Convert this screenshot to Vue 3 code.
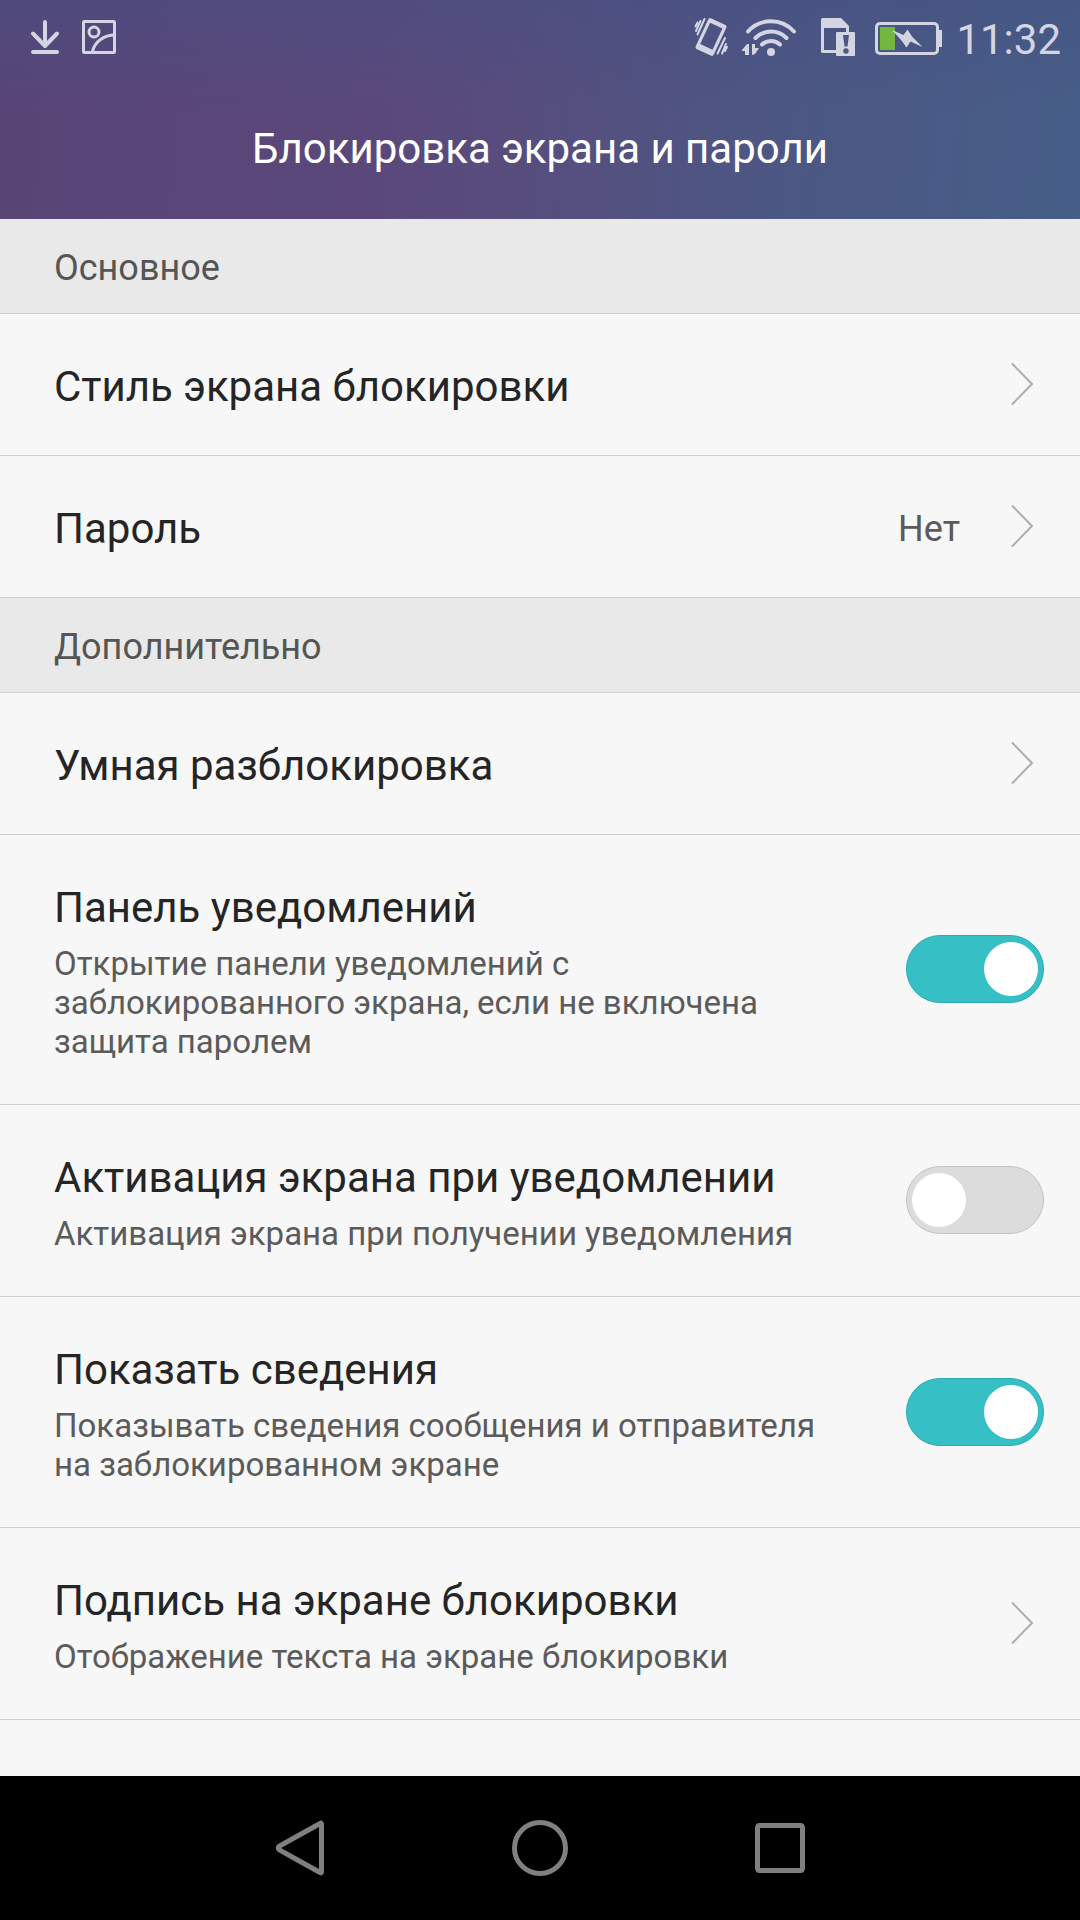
<script setup>
import { ref } from 'vue'

const sections = ref([
  {
    title: 'Основное',
    rows: [
      { id: 'style', title: 'Стиль экрана блокировки' },
      { id: 'password', title: 'Пароль', value: 'Нет' },
    ],
  },
  {
    title: 'Дополнительно',
    rows: [
      { id: 'smart', title: 'Умная разблокировка' },
      {
        id: 'panel',
        title: 'Панель уведомлений',
        text: 'Открытие панели уведомлений с заблокированного экрана, если не включена защита паролем',
        toggle: true,
        on: true,
      },
      {
        id: 'wake',
        title: 'Активация экрана при уведомлении',
        text: 'Активация экрана при получении уведомления',
        toggle: true,
        on: false,
      },
      {
        id: 'details',
        title: 'Показать сведения',
        text: 'Показывать сведения сообщения и отправителя на заблокированном экране',
        toggle: true,
        on: true,
      },
      {
        id: 'signature',
        title: 'Подпись на экране блокировки',
        text: 'Отображение текста на экране блокировки',
      },
    ],
  },
])
</script>

<template>
  <div class="screen">
    <header class="top">
      <div class="status">
        <svg class="icon" width="34" height="78" viewBox="28 0 34 78" aria-hidden="true">
          <path d="M45 22V45M33 33.500L45 46L57 33.500M33 52H57" class="line thick" />
        </svg>
        <svg class="icon" width="34" height="78" viewBox="82 0 34 78" aria-hidden="true">
          <rect x="83.500" y="21.500" width="31" height="31" rx="1" class="line" />
          <circle cx="94" cy="32" r="5" class="line mid" />
          <path d="M92.500 52C94 42 104 35 115 35" class="line" />
        </svg>
        <span class="spacer"></span>
        <svg class="icon" width="38" height="78" viewBox="691 0 38 78" aria-hidden="true">
          <g transform="rotate(25 710 37)">
            <path fill-rule="evenodd" class="fill" d="M702.500 20H717.500Q720 20 720 22.500V51.500Q720 54 717.500 54H702.500Q700 54 700 51.500V22.500Q700 20 702.500 20ZM703.200 24.500V48H716.800V24.500Z" />
          </g>
          <path class="line thin" d="M703.500 19L696.500 34.500M699.500 21L695 31M696.500 22.500L694.500 26.500M724 38L716.500 53.500M725 44L721 53.500M726 47L724 51" />
        </svg>
        <svg class="icon wifi" width="56" height="78" viewBox="740 0 56 78" aria-hidden="true">
          <path class="line thick" d="M747 31.500A31 31 0 0 1 793 31.500M754.500 38A22 22 0 0 1 785.500 38M761 44.500A13 13 0 0 1 779 44.500" />
          <circle class="fill" cx="770" cy="52" r="4" />
          <path class="fill" d="M741 50L746 44H748V55H744V51H741ZM751 44H754V48H758L754 54L751 55Z" />
        </svg>
        <svg class="icon sim" width="34" height="78" viewBox="820 0 34 78" aria-hidden="true">
          <path fill-rule="evenodd" class="fill" d="M821.500 18H840L848 26V53H821.500Q820 53 820 51.500V19.500Q820 18 821.500 18ZM823 28V50H845V28Z" />
          <rect class="fill" x="835" y="32" width="19" height="24" rx="1" />
          <path class="mark" d="M842 35H848L846.500 46.500H843.500Z" />
          <circle class="mark" cx="845" cy="51" r="2.700" />
        </svg>
        <svg class="icon battery" width="67" height="78" viewBox="875 0 67 78" aria-hidden="true">
          <rect x="876.500" y="23.500" width="61" height="30" rx="3.500" class="line" />
          <path class="fill" d="M939 30H942V47H939Z" />
          <path fill="#72b840" d="M880 27H895V50H880Z" />
          <path class="fill" d="M892 30L903.500 35L907.500 29.500L912 36.500L922.500 47L910.500 41.500L906.500 47.500L901.500 40.500Z" />
        </svg>
        <time class="clock">11:32</time>
      </div>
      <h1>Блокировка экрана и пароли</h1>
    </header>

    <main>
      <section v-for="section in sections" :key="section.title">
        <h2>{{ section.title }}</h2>
        <template v-for="row in section.rows" :key="row.id">
          <label v-if="row.toggle" class="row">
            <span class="copy">
              <span class="title">{{ row.title }}</span>
              <span class="text">{{ row.text }}</span>
            </span>
            <input v-model="row.on" type="checkbox" role="switch" class="switch" />
          </label>
          <button v-else type="button" class="row">
            <span class="copy">
              <span class="title">{{ row.title }}</span>
              <span v-if="row.text" class="text">{{ row.text }}</span>
            </span>
            <span v-if="row.value" class="value">{{ row.value }}</span>
            <svg class="chevron" width="24" height="44" viewBox="0 0 24 44" aria-hidden="true">
              <path d="M2 1.500L22 22L2 42.500" />
            </svg>
          </button>
        </template>
      </section>
    </main>

    <nav>
      <button type="button" aria-label="Назад">
        <svg width="60" height="60" viewBox="0 0 60 60" aria-hidden="true">
          <path d="M51.500 6V54Q51.500 55.500 50 54.500L9.500 32Q7 30 9.500 28L50 5.500Q51.500 4.500 51.500 6Z" />
        </svg>
      </button>
      <button type="button" aria-label="Домой">
        <svg width="60" height="60" viewBox="0 0 60 60" aria-hidden="true">
          <circle cx="30" cy="30" r="25.500" />
        </svg>
      </button>
      <button type="button" aria-label="Недавние">
        <svg width="60" height="60" viewBox="0 0 60 60" aria-hidden="true">
          <rect x="7.500" y="7.500" width="45" height="45" rx="2" />
        </svg>
      </button>
    </nav>
  </div>
</template>

<style>
body {
  margin: 0;
  background: #f7f7f7;
}
</style>

<style scoped>
.screen {
  display: flex;
  flex-direction: column;
  min-height: 100vh;
  background: #f7f7f7;
  font-family: Roboto, "Noto Sans", sans-serif;
  color: #252525;
}

.top {
  color: #fff;
  background:
    linear-gradient(to bottom, rgba(70, 80, 130, 0.5), rgba(70, 80, 130, 0) 110px),
    linear-gradient(95deg, #594476 0%, #5b487b 36%, #564e7e 50%, #4d5683 70%, #455e87 100%);
}

.status {
  display: flex;
  align-items: center;
  height: 78px;
  padding: 0 19px 0 28px;
  color: #d3d5e2;
}

.icon {
  flex: none;
  margin-right: 20px;
}

.spacer {
  flex: 1;
}

.icon.wifi {
  margin: 0 24px 0 -9px;
}

.icon.battery {
  margin-right: 14px;
}

.line {
  fill: none;
  stroke: currentColor;
  stroke-width: 3;
  stroke-linecap: round;
  stroke-linejoin: round;
}

.line.thick {
  stroke-width: 4;
}

.line.thin {
  stroke-width: 2;
}

.fill {
  fill: currentColor;
}

.mark {
  fill: #4a5884;
}

.clock {
  font-size: 42px;
  line-height: 49px;
}

h1 {
  margin: 0;
  padding: 46px 24px;
  font-size: 42px;
  font-weight: 400;
  line-height: 49px;
  text-align: center;
}

main {
  flex: 1;
}

h2 {
  margin: 0;
  padding: 28px 54px 24px;
  border-bottom: 1px solid #cfcfcf;
  background: #e9e9e9;
  color: #555;
  font-size: 36px;
  font-weight: 400;
  line-height: 42px;
}

.row {
  display: flex;
  align-items: center;
  box-sizing: border-box;
  width: 100%;
  min-height: 142px;
  padding: 0 36px 0 54px;
  border: 0;
  border-bottom: 1px solid #cfcfcf;
  background: none;
  color: inherit;
  font: inherit;
  text-align: left;
  cursor: pointer;
}

.copy {
  display: flex;
  flex: 1;
  flex-direction: column;
  align-self: flex-start;
  gap: 12px;
  padding: 48px 60px 43px 0;
}

.title {
  font-size: 42px;
  line-height: 49px;
}

.text {
  color: #5b5b5b;
  font-size: 33px;
  line-height: 39px;
}

.value {
  margin-right: 50px;
  padding-top: 5px;
  color: #5b5b5b;
  font-size: 36px;
  line-height: 42px;
}

.chevron {
  flex: none;
  margin: 0 10px 1px 0;
  fill: none;
  stroke: #adadad;
  stroke-width: 2;
}

.switch {
  flex: none;
  display: flex;
  align-items: center;
  box-sizing: border-box;
  width: 138px;
  height: 68px;
  margin: 0 0 1px;
  padding: 0 5px;
  appearance: none;
  border: 1px solid #c4c4c4;
  border-radius: 34px;
  background: #dcdcdc;
  cursor: pointer;
}

.switch::before {
  content: "";
  width: 54px;
  height: 54px;
  border-radius: 50%;
  background: #fff;
}

.switch:checked {
  justify-content: flex-end;
  border-color: #2aabb0;
  background: #36c0c6;
}

nav {
  display: flex;
  height: 144px;
  padding: 0 calc(100% / 6);
  background: #000;
}

nav button {
  display: flex;
  flex: 1;
  align-items: center;
  justify-content: center;
  padding: 0;
  border: 0;
  background: none;
  cursor: pointer;
}

nav svg {
  fill: none;
  stroke: #808080;
  stroke-width: 5;
}
</style>
